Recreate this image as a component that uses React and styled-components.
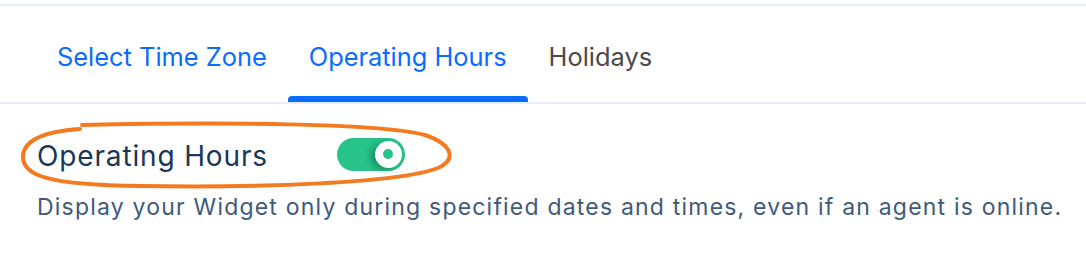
import React from 'react'
import styled, { createGlobalStyle } from 'styled-components'

const Global = createGlobalStyle`
  body {
    margin: 0;
    background: #fff;
    font-family: 'Inter', 'Noto Sans', sans-serif;
  }
`

const Page = styled.div`
  position: relative;
  width: 1086px;
  height: 262px;
  overflow: hidden;
  background: #fff;
  padding-top: 4px;
  box-sizing: border-box;
`
const TabBar = styled.div`
  display: flex;
  flex-direction: row;
  align-items: stretch;
  height: 96px;
  padding-left: 36px;
  border-top: 2px solid #e4eefa;
  border-bottom: 2px solid #e4eefa;
`
const Tab = styled.div`
  position: relative;
  display: flex;
  align-items: center;
  padding: 4px 21px 0;
  font-size: 25.4px;
  color: ${props => (props.muted ? '#4a4a4a' : '#0a6cff')};
  cursor: pointer;
  &::after {
    content: '';
    display: ${props => (props.active ? 'block' : 'none')};
    position: absolute;
    left: 0;
    right: 0;
    bottom: 0;
    height: 6px;
    background: #0a6cff;
    border-radius: 4px 4px 0 0;
  }
`
const Section = styled.div`
  padding: 32px 37px 0;
`
const HeadingRow = styled.div`
  display: flex;
  flex-direction: row;
  align-items: center;
  gap: 69px;
  height: 40px;
`
const Heading = styled.h3`
  margin: 0;
  font-weight: 400;
  font-size: 28px;
  letter-spacing: 0.85px;
  color: #1b3756;
`
const Toggle = styled.div`
  position: relative;
  width: 68px;
  height: 33px;
  border-radius: 17px;
  background: #27c38a;
  margin-top: -4px;
`
const Knob = styled.div`
  position: absolute;
  right: 3px;
  top: 3px;
  width: 27px;
  height: 27px;
  border-radius: 50%;
  background: #fff;
  box-shadow: -4px 2px 6px rgba(10, 80, 50, 0.45);
  display: flex;
  align-items: center;
  justify-content: center;
  div {
    width: 10px;
    height: 10px;
    border-radius: 50%;
    background: #27c38a;
  }
`
const Description = styled.p`
  margin: 17px 0 0;
  font-size: 23px;
  letter-spacing: 1.2px;
  color: #3e5a7b;
  white-space: nowrap;
`
const Scribble = styled.svg`
  position: absolute;
  left: 0;
  top: 0;
  pointer-events: none;
`

const App = () => {
  return (
    <Page>
      <Global />
      <TabBar>
        <Tab>Select Time Zone</Tab>
        <Tab active>Operating Hours</Tab>
        <Tab muted>Holidays</Tab>
      </TabBar>
      <Section>
        <HeadingRow>
          <Heading>Operating Hours</Heading>
          <Toggle>
            <Knob>
              <div></div>
            </Knob>
          </Toggle>
        </HeadingRow>
        <Description>
          Display your Widget only during specified dates and times, even if an agent is online.
        </Description>
      </Section>
      <Scribble width="1086" height="262" viewBox="0 0 1086 262">
        <path
          d="M 80 129 C 50 131, 24 138, 23 156 C 22 176, 50 185, 140 186 C 260 188, 400 183, 438 168 C 456 160, 454 145, 425 135 C 380 123, 220 122, 82 125"
          fill="none"
          stroke="#f47a20"
          strokeWidth="4"
          strokeLinecap="round"
        />
      </Scribble>
    </Page>
  )
}

export default App
